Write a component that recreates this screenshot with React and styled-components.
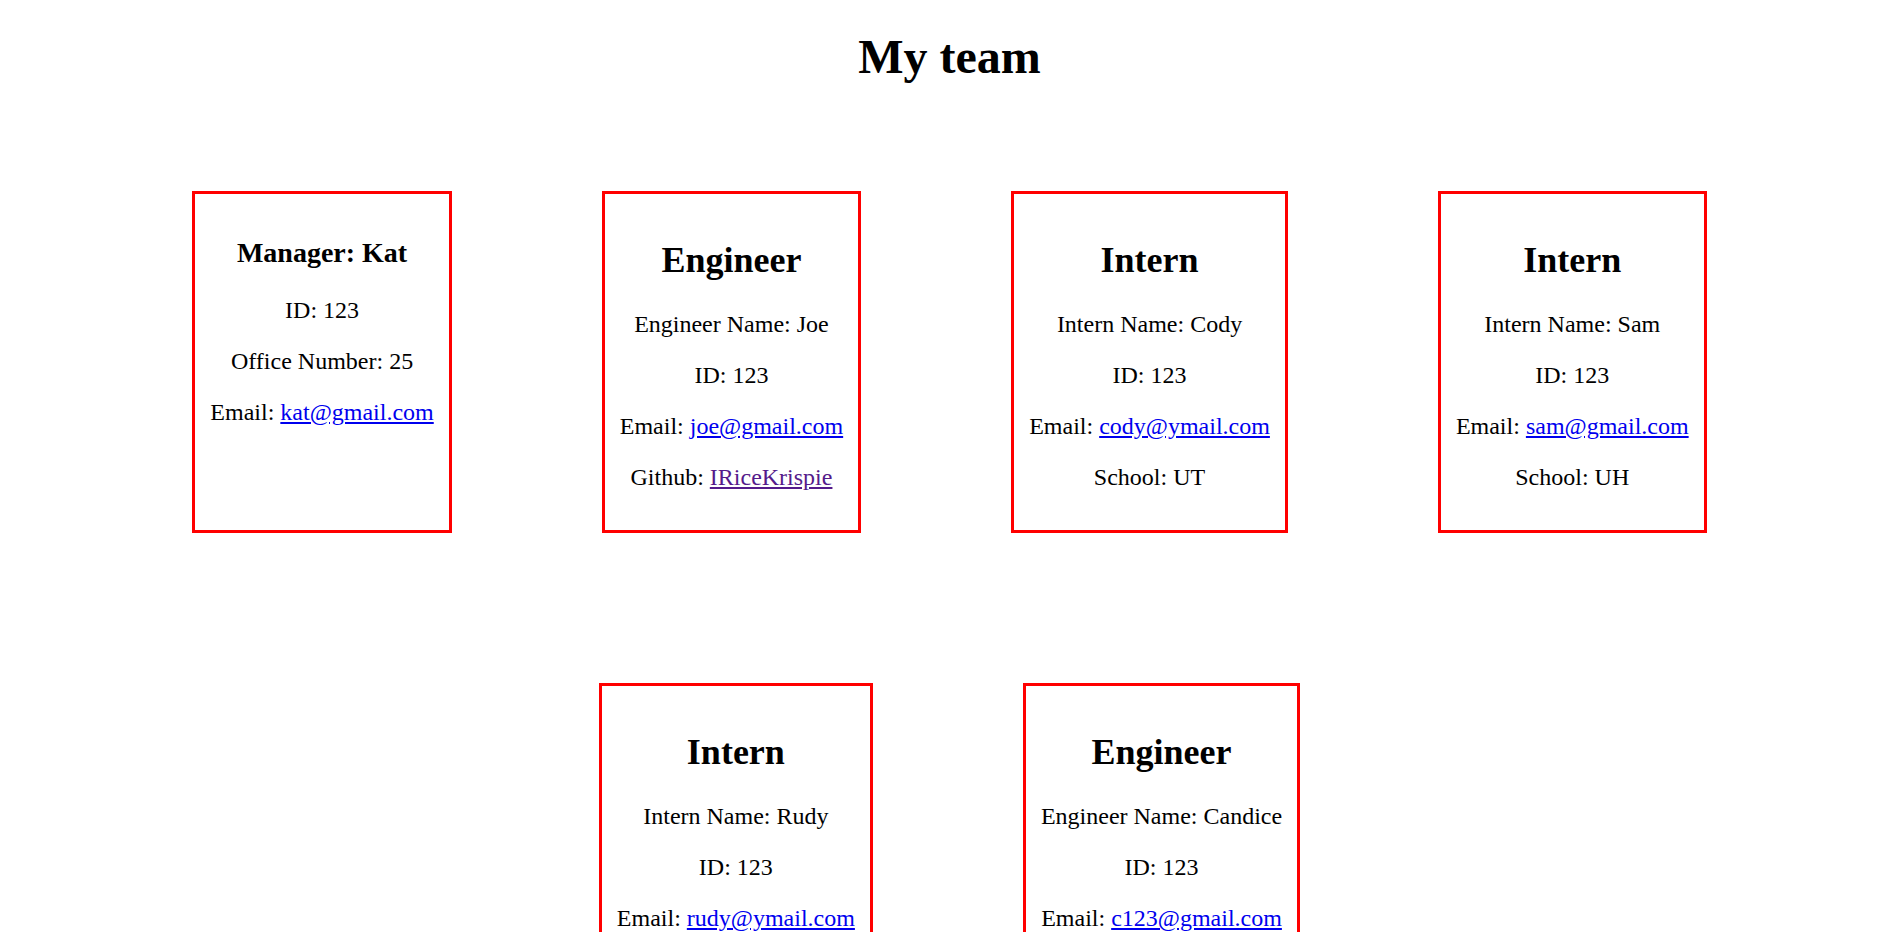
import React from "react";
import styled, { createGlobalStyle } from "styled-components";

const GlobalStyle = createGlobalStyle`
  html {
    background: #ffffff;
    scrollbar-width: none;
  }
  html::-webkit-scrollbar {
    display: none;
  }
  body {
    margin: 12px 16px 12px 12px;
    font-family: "Liberation Serif", "Times New Roman", serif;
    font-size: 24px;
    color: #000000;
    background: #ffffff;
  }
`;

const Page = styled.main`
  display: block;
`;

const Heading = styled.h1`
  margin: 17px 0 32px;
  font-size: 48px;
  font-weight: bold;
  text-align: center;
`;

const Team = styled.section`
  display: flex;
  flex-wrap: wrap;
  justify-content: center;
  align-items: stretch;
`;

const Card = styled.article`
  margin: 75px;
  padding: 15px;
  border: 3px solid #ff0000;
  text-align: center;
`;

const Role = styled.h2`
  margin: ${(p) => (p.$small ? "28px 0" : "30px 0")};
  font-size: ${(p) => (p.$small ? "28px" : "36px")};
  font-weight: bold;
`;

const Field = styled.p`
  margin: 24px 0;
`;

const Link = styled.a`
  color: ${(p) => (p.$visited ? "#551a8b" : "#0000ee")};
  text-decoration: underline;
`;

const team = [
  {
    role: "Manager: Kat",
    small: true,
    fields: [
      ["ID", "123"],
      ["Office Number", "25"],
      ["Email", "kat@gmail.com", "email"],
    ],
  },
  {
    role: "Engineer",
    fields: [
      ["Engineer Name", "Joe"],
      ["ID", "123"],
      ["Email", "joe@gmail.com", "email"],
      ["Github", "IRiceKrispie", "github"],
    ],
  },
  {
    role: "Intern",
    fields: [
      ["Intern Name", "Cody"],
      ["ID", "123"],
      ["Email", "cody@ymail.com", "email"],
      ["School", "UT"],
    ],
  },
  {
    role: "Intern",
    fields: [
      ["Intern Name", "Sam"],
      ["ID", "123"],
      ["Email", "sam@gmail.com", "email"],
      ["School", "UH"],
    ],
  },
  {
    role: "Intern",
    fields: [
      ["Intern Name", "Rudy"],
      ["ID", "123"],
      ["Email", "rudy@ymail.com", "email"],
      ["School", "UT"],
    ],
  },
  {
    role: "Engineer",
    fields: [
      ["Engineer Name", "Candice"],
      ["ID", "123"],
      ["Email", "c123@gmail.com", "email"],
      ["Github", "candice123", "github"],
    ],
  },
];

function Value({ value, kind }) {
  if (kind === "email") {
    return <Link href={`mailto:${value}`}>{value}</Link>;
  }
  if (kind === "github") {
    return (
      <Link $visited href={`https://github.com/${value}`}>
        {value}
      </Link>
    );
  }
  return value;
}

export default function App() {
  return (
    <Page>
      <GlobalStyle />
      <Heading>My team</Heading>
      <Team>
        {team.map((member, i) => (
          <Card key={i}>
            <Role $small={member.small}>{member.role}</Role>
            {member.fields.map(([label, value, kind]) => (
              <Field key={label}>
                {label}: <Value value={value} kind={kind} />
              </Field>
            ))}
          </Card>
        ))}
      </Team>
    </Page>
  );
}
